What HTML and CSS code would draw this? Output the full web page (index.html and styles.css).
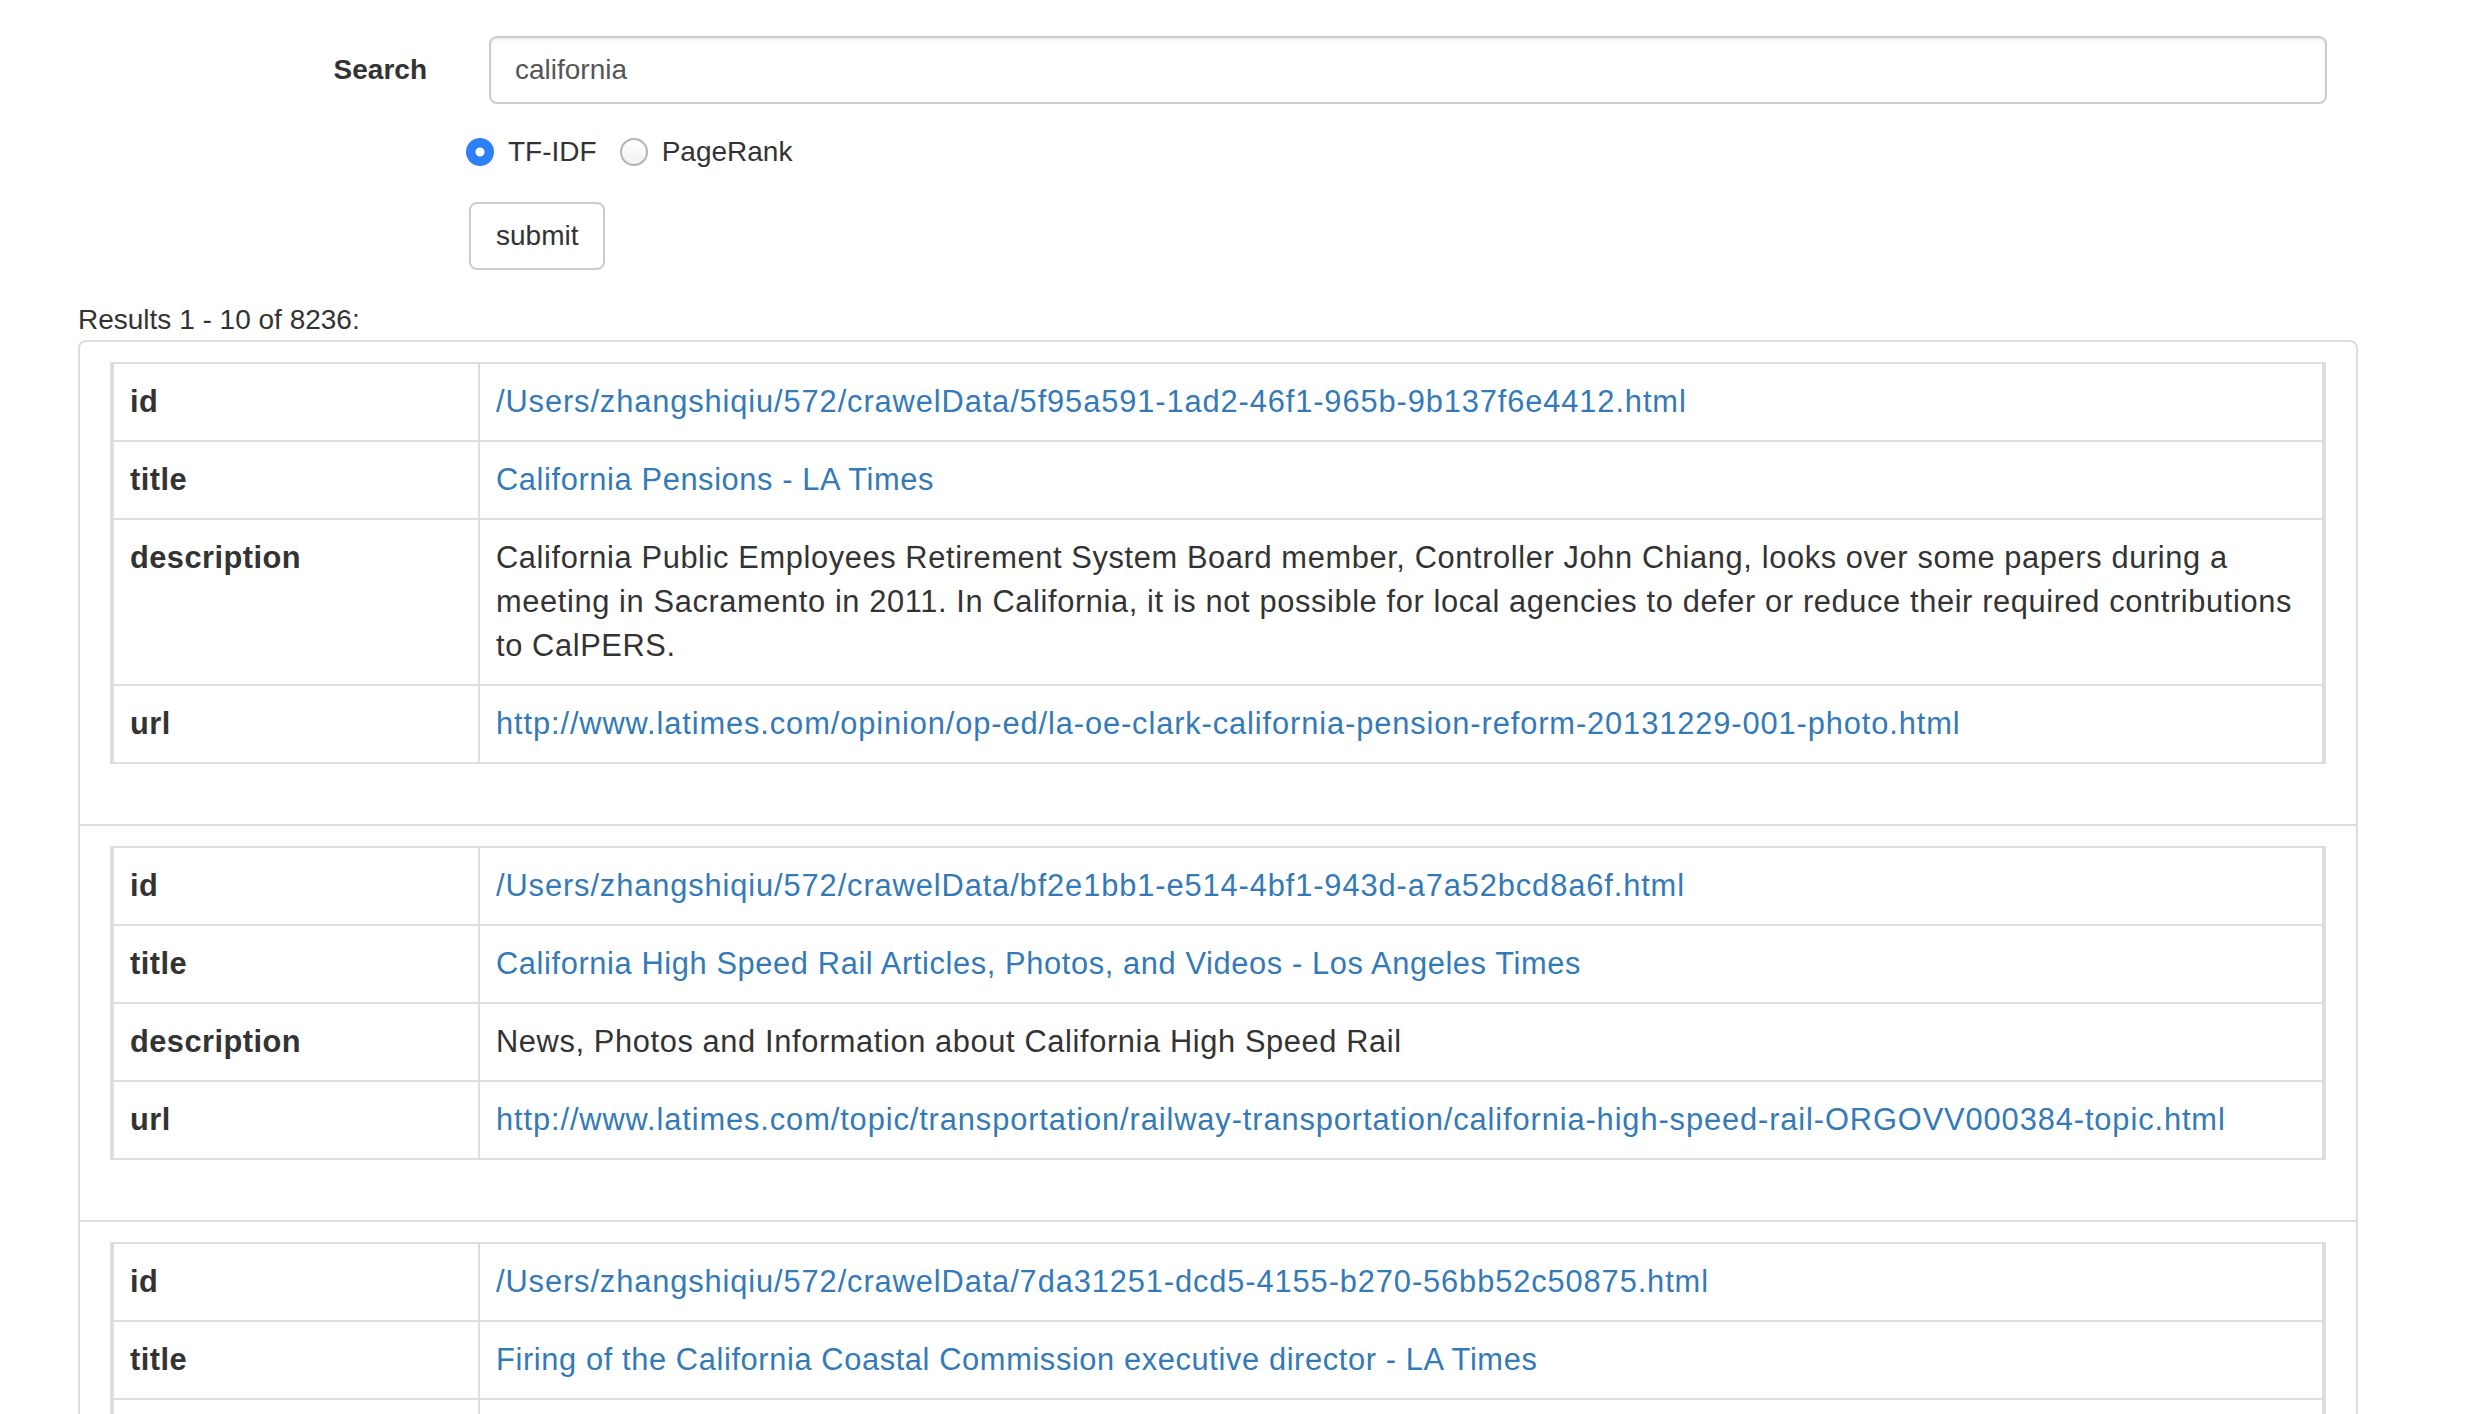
FILE: index.html
```html
<!DOCTYPE html>
<html lang="en">
<head>
<meta charset="utf-8">
<title>Search</title>
<link rel="stylesheet" href="styles.css">
</head>
<body>
<div class="page">
  <form class="search-form">
    <div class="field-row">
      <label class="field-label" for="q">Search</label>
      <input class="field-input" id="q" type="text" value="california">
    </div>
    <div class="radio-row">
      <label class="radio-opt"><span class="radio radio-on"></span><span>TF-IDF</span></label>
      <label class="radio-opt radio-opt-next"><span class="radio"></span><span>PageRank</span></label>
    </div>
    <div class="button-row">
      <button class="btn" type="button">submit</button>
    </div>
  </form>

  <p class="results-count">Results 1 - 10 of 8236:</p>

  <ul class="results">
    <li class="result">
      <table class="doc">
        <tr><th>id</th><td><a class="path" href="#">/Users/zhangshiqiu/572/crawelData/5f95a591-1ad2-46f1-965b-9b137f6e4412.html</a></td></tr>
        <tr><th>title</th><td><a href="#">California Pensions - LA Times</a></td></tr>
        <tr><th>description</th><td>California Public Employees Retirement System Board member, Controller John Chiang, looks over some papers during a meeting in Sacramento in 2011. In California, it is not possible for local agencies to defer or reduce their required contributions to CalPERS.</td></tr>
        <tr><th>url</th><td><a class="path" href="#">http://www.latimes.com/opinion/op-ed/la-oe-clark-california-pension-reform-20131229-001-photo.html</a></td></tr>
      </table>
    </li>
    <li class="result">
      <table class="doc">
        <tr><th>id</th><td><a class="path" href="#">/Users/zhangshiqiu/572/crawelData/bf2e1bb1-e514-4bf1-943d-a7a52bcd8a6f.html</a></td></tr>
        <tr><th>title</th><td><a href="#">California High Speed Rail Articles, Photos, and Videos - Los Angeles Times</a></td></tr>
        <tr><th>description</th><td>News, Photos and Information about California High Speed Rail</td></tr>
        <tr><th>url</th><td><a class="path" href="#">http://www.latimes.com/topic/transportation/railway-transportation/california-high-speed-rail-ORGOVV000384-topic.html</a></td></tr>
      </table>
    </li>
    <li class="result">
      <table class="doc">
        <tr><th>id</th><td><a class="path" href="#">/Users/zhangshiqiu/572/crawelData/7da31251-dcd5-4155-b270-56bb52c50875.html</a></td></tr>
        <tr><th>title</th><td><a href="#">Firing of the California Coastal Commission executive director - LA Times</a></td></tr>
        <tr><th>description</th><td>California Coastal Commission</td></tr>
        <tr><th>url</th><td><a class="path" href="#">http://www.latimes.com/opinion/editorials/</a></td></tr>
      </table>
    </li>
  </ul>
</div>
</body>
</html>
```

FILE: styles.css
```css
html, body {
  margin: 0;
  padding: 0;
  background: #fff;
}

body {
  font-family: "Liberation Sans", Arial, Helvetica, sans-serif;
  font-size: 28px;
  line-height: 40px;
  color: #333;
}

.page {
  padding: 36px 0 40px 78px;
}

.search-form {
  margin: 0;
}

.field-row {
  display: flex;
  align-items: center;
  height: 68px;
}

.field-label {
  width: 349px;
  margin-right: 62px;
  text-align: right;
  font-weight: bold;
}

.field-input {
  box-sizing: border-box;
  width: 1838px;
  height: 68px;
  padding: 0 24px;
  border: 2px solid #ccc;
  border-radius: 8px;
  box-shadow: inset 0 2px 2px rgba(0, 0, 0, 0.075);
  font-family: inherit;
  font-size: 28px;
  color: #555;
  background: #fff;
  outline: none;
}

.radio-row {
  display: flex;
  align-items: center;
  height: 40px;
  margin-top: 28px;
  padding-left: 388px;
}

.radio-opt {
  display: flex;
  align-items: center;
}

.radio-opt-next {
  margin-left: 23px;
}

.radio {
  box-sizing: border-box;
  width: 28px;
  height: 28px;
  margin-right: 14px;
  border-radius: 50%;
  border: 2px solid #b3b3b3;
  background: linear-gradient(#ffffff, #f1f1f1);
}

.radio-on {
  border: none;
  background: radial-gradient(circle, #ffffff 0, #ffffff 4px, #2f80f7 5px);
}

.button-row {
  margin-top: 30px;
  padding-left: 391px;
}

.btn {
  box-sizing: border-box;
  height: 68px;
  padding: 0 25px;
  border: 2px solid #ccc;
  border-radius: 8px;
  background: #fff;
  font-family: inherit;
  font-size: 28px;
  color: #333;
}

.results-count {
  margin: 30px 0 0 0;
  line-height: 40px;
}

.results {
  list-style: none;
  margin: 0;
  padding: 0;
  width: 2280px;
}

.result {
  border: 2px solid #ddd;
  padding: 20px 30px;
  margin-bottom: -2px;
}

.result:first-child {
  border-top-left-radius: 8px;
  border-top-right-radius: 8px;
}

.result:last-child {
  border-bottom-left-radius: 8px;
  border-bottom-right-radius: 8px;
}

.doc {
  width: 100%;
  table-layout: fixed;
  border-collapse: separate;
  border-spacing: 0;
  border-style: solid;
  border-color: #ddd;
  border-width: 2px 4px;
  margin-bottom: 40px;
  font-size: 30.8px;
  line-height: 44px;
  letter-spacing: 0.62px;
}

.doc th,
.doc td {
  padding: 16px;
  vertical-align: top;
  text-align: left;
}

.doc th {
  width: 332px;
  font-weight: bold;
  letter-spacing: 0.45px;
}

.doc td {
  border-left: 2px solid #ddd;
}

.doc tr + tr > th,
.doc tr + tr > td {
  border-top: 2px solid #ddd;
}

.doc a {
  color: #337ab7;
  text-decoration: none;
}

.doc .path {
  letter-spacing: 0.9px;
}
```
